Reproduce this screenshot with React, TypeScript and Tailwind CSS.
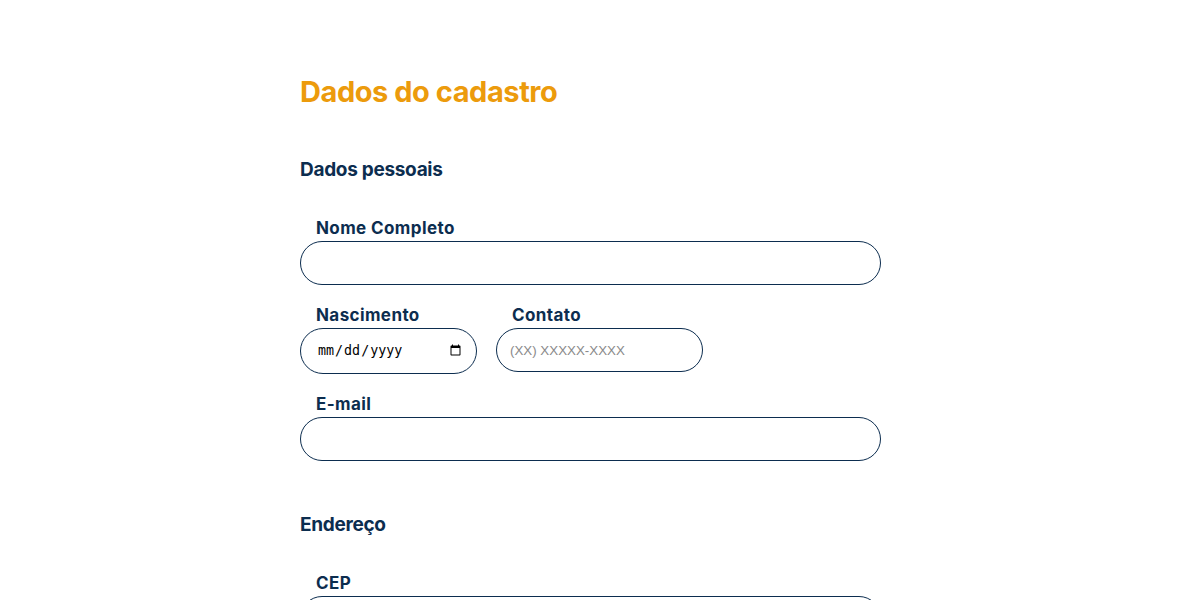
import React from 'react';

const heading = "font-['Inter',sans-serif] font-bold text-[#0c2d4f]";

function Field({ label, width, children }: { label: string; width: string; children: React.ReactNode }) {
  return (
    <div className={`flex flex-col ${width}`}>
      <label className={`${heading} text-[17px] leading-6 tracking-[0.4px] pl-4 mb-px pt-px`}>{label}</label>
      {children}
    </div>
  );
}

const inputCls =
  "h-[44px] w-full rounded-full border border-[#0c2d4f] bg-white px-4 outline-none font-['Liberation_Sans',Arial,sans-serif] text-[13.33px] text-gray-700 placeholder:text-[#8a8a8a]";

export default function App() {
  return (
    <div className="min-h-screen bg-white">
      <div className="w-[600px] mx-auto pt-[74px] pb-10">
        <h1 className="font-['Inter',sans-serif] font-bold text-[#ec9b0c] text-[29px] leading-9 tracking-[-0.45px]">
          Dados do cadastro
        </h1>

        <h2 className={`${heading} text-[19px] leading-6 tracking-[-0.3px] mt-12`}>Dados pessoais</h2>

        <div className="flex flex-col gap-[17px] mt-[33px]">
          <Field label="Nome Completo" width="w-[581px]">
            <input type="text" className={inputCls} />
          </Field>

          <div className="flex gap-[19px]">
            <Field label="Nascimento" width="w-[177px]">
              <input
                type="date"
                className="h-[46px] w-full rounded-full border border-[#0c2d4f] bg-white pl-4 pr-3 outline-none font-['DejaVu_Sans_Mono',monospace] text-[13.33px] text-black"
              />
            </Field>
            <Field label="Contato" width="w-[207px]">
              <input type="tel" placeholder="(XX) XXXXX-XXXX" className={`${inputCls} pl-[13px]`} />
            </Field>
          </div>

          <Field label="E-mail" width="w-[581px]">
            <input type="email" className={inputCls} />
          </Field>
        </div>

        <h2 className={`${heading} text-[19px] leading-6 tracking-[-0.3px] mt-[52px]`}>Endereço</h2>

        <div className="flex flex-col gap-[18px] mt-[33px]">
          <Field label="CEP" width="w-[581px]">
            <input type="text" className={inputCls} />
          </Field>
        </div>
      </div>
    </div>
  );
}
